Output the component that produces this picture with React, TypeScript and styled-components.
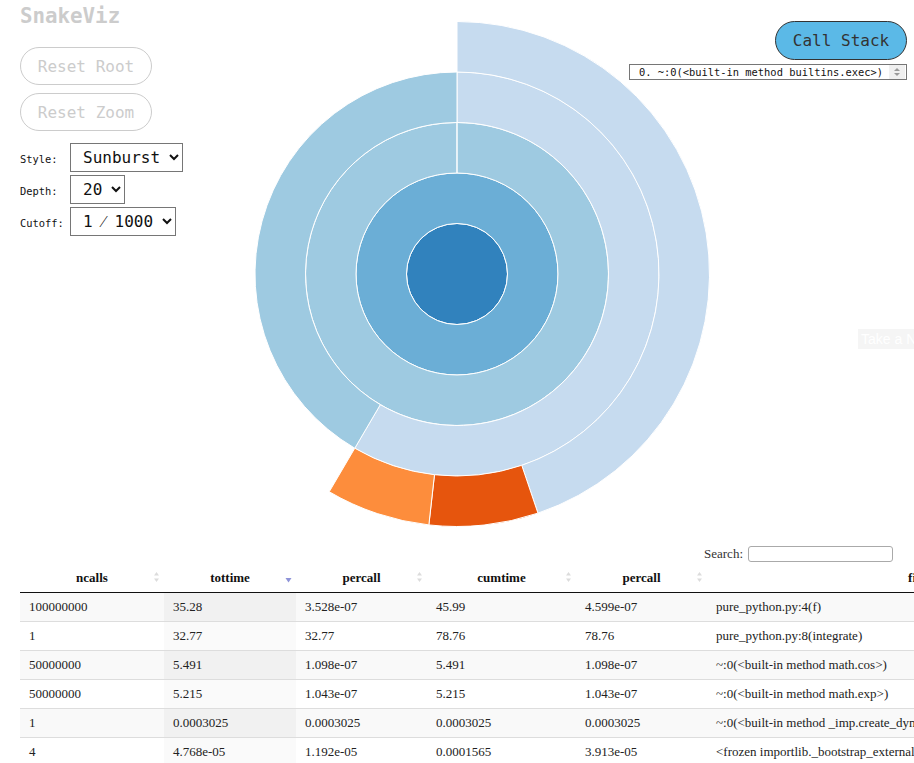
import React from "react";
import styled, { createGlobalStyle } from "styled-components";

const Global = createGlobalStyle`
  html, body { margin: 0; padding: 0; overflow: hidden; background: #fff; }
  body { font-family: "DejaVu Sans Mono", monospace; color: #222; }
`;

const Page = styled.div`
  position: relative;
  width: 914px;
  height: 763px;
  overflow: hidden;
`;

const Top = styled.div`
  display: grid;
  grid-template-columns: 184px 506px minmax(0, 1fr);
  padding: 0 7px 0 20px;
  align-items: start;
`;

const LeftCol = styled.div`
  display: flex;
  flex-direction: column;
  align-items: flex-start;
`;

const Title = styled.h1`
  margin: 4px 0 0;
  font-family: "DejaVu Sans Mono", monospace;
  font-weight: bold;
  font-size: 20.8px;
  line-height: 24px;
  color: #cccccc;
`;

const PillButton = styled.button<{ $active?: boolean }>`
  box-sizing: border-box;
  width: 132px;
  height: ${(p) => (p.$active ? 39 : 38)}px;
  border-radius: 20px;
  border: 1px solid ${(p) => (p.$active ? "#333" : "#cccccc")};
  background: ${(p) => (p.$active ? "#5bb9e7" : "#fff")};
  color: ${(p) => (p.$active ? "#333" : "#cccccc")};
  font-family: "DejaVu Sans Mono", monospace;
  font-size: 16px;
  padding: 0;
  margin-top: ${(p) => (p.$active ? 0 : 8)}px;
  &:first-of-type { margin-top: ${(p) => (p.$active ? 0 : 19)}px; }
`;

const Controls = styled.div`
  display: grid;
  grid-template-columns: 50px auto;
  row-gap: 3px;
  align-items: center;
  justify-items: start;
  margin-top: 12px;
`;

const Label = styled.label`
  font-family: "DejaVu Sans Mono", monospace;
  font-size: 10.4px;
  color: #111;
  padding-top: 2px;
`;

const Select = styled.select`
  box-sizing: border-box;
  height: 29px;
  font-family: "DejaVu Sans Mono", monospace;
  font-size: 16px;
  color: #111;
  background: #fff;
  border: 1px solid #767676;
  border-radius: 0;
  padding: 0 5px 0 8px;
`;

const Center = styled.div`
  margin-top: 21px;
  width: 506px;
  height: 506px;
`;

const RightCol = styled.div`
  margin-top: 21px;
  display: flex;
  flex-direction: column;
  align-items: flex-end;
`;

const StackBox = styled.div`
  position: relative;
  box-sizing: border-box;
  margin-top: 4px;
  width: 278px;
  height: 16px;
  border: 1px solid #767676;
  background: #fff;
  display: flex;
  align-items: center;
  padding-left: 9px;
  font-family: "DejaVu Sans Mono", monospace;
  font-size: 10.4px;
  color: #111;
  white-space: nowrap;
`;

const Spinner = styled.span`
  position: absolute;
  right: 1px;
  top: 0;
  width: 16px;
  height: 14px;
  background: #f0f0f0;
  display: flex;
  align-items: center;
  justify-content: center;
`;

const Tip = styled.div`
  position: absolute;
  left: 858px;
  top: 329px;
  height: 20px;
  padding: 0 3px;
  background: #f5f5f5;
  color: #fff;
  font-family: "Liberation Sans", sans-serif;
  font-size: 14px;
  line-height: 20px;
  white-space: nowrap;
`;

const TableSection = styled.div`
  padding-left: 20px;
  margin-top: 19px;
`;

const SearchRow = styled.div`
  display: flex;
  justify-content: flex-end;
  align-items: center;
  padding-right: 21px;
  width: 894px;
  box-sizing: border-box;
  font-family: "Liberation Serif", serif;
  font-size: 13px;
  color: #333;
`;

const SearchInput = styled.input`
  box-sizing: border-box;
  width: 145px;
  height: 16px;
  margin: 0 0 0 5px;
  padding: 0 4px;
  border: 1px solid #aaa;
  border-radius: 3px;
  background: transparent;
`;

const Table = styled.table`
  margin-top: 2px;
  table-layout: fixed;
  border-collapse: separate;
  border-spacing: 0;
  width: 1230px;
  font-family: "Liberation Serif", serif;
  font-size: 13px;
  color: #222;
`;

const Th = styled.th`
  position: relative;
  box-sizing: border-box;
  height: 29px;
  padding: 0 18px;
  text-align: center;
  vertical-align: middle;
  font-weight: bold;
  color: #111;
  border-bottom: 1px solid #111;
  white-space: nowrap;
`;

const SortIcon = styled.span`
  position: absolute;
  right: 4px;
  top: 7px;
  width: 7px;
  height: 12px;
  display: flex;
`;

const Tr = styled.tr<{ $odd: boolean }>`
  background: ${(p) => (p.$odd ? "#f9f9f9" : "#fff")};
`;

const Td = styled.td<{ $sorted?: boolean; $odd: boolean; $first: boolean }>`
  height: 28px;
  padding: 0 10px 0 9px;
  vertical-align: middle;
  white-space: nowrap;
  overflow: hidden;
  border-top: ${(p) => (p.$first ? "none" : "1px solid #ddd")};
  background: ${(p) =>
    p.$sorted ? (p.$odd ? "#f1f1f1" : "#fafafa") : "transparent"};
`;

const CX = 253;
const CY = 253;

function pt(r: number, a: number): string {
  const rad = (a * Math.PI) / 180;
  return `${(CX + r * Math.sin(rad)).toFixed(2)},${(CY - r * Math.cos(rad)).toFixed(2)}`;
}

/* Annular sector; each arc split at its midpoint so near-full rings render. */
function arcPath(r0: number, r1: number, a0: number, a1: number): string {
  const m = (a0 + a1) / 2;
  const lg = (a1 - a0) / 2 > 180 ? 1 : 0;
  return (
    `M${pt(r1, a0)}A${r1},${r1} 0 ${lg} 1 ${pt(r1, m)}A${r1},${r1} 0 ${lg} 1 ${pt(r1, a1)}` +
    `L${pt(r0, a1)}A${r0},${r0} 0 ${lg} 0 ${pt(r0, m)}A${r0},${r0} 0 ${lg} 0 ${pt(r0, a0)}Z`
  );
}

function ringPath(r0: number, r1: number): string {
  return (
    `M${CX},${CY - r1}A${r1},${r1} 0 1 1 ${CX},${CY + r1}A${r1},${r1} 0 1 1 ${CX},${CY - r1}` +
    `M${CX},${CY - r0}A${r0},${r0} 0 1 0 ${CX},${CY + r0}A${r0},${r0} 0 1 0 ${CX},${CY - r0}Z`
  );
}

const segments = [
  { r0: 50.5, r1: 101, a0: 0, a1: 360, fill: "#6baed6" },
  { r0: 101, r1: 151.5, a0: 0, a1: 359.99, fill: "#9ecae1" },
  { r0: 151.5, r1: 202, a0: 0, a1: 210.4, fill: "#c6dbef" },
  { r0: 151.5, r1: 202, a0: 210.4, a1: 360, fill: "#9ecae1" },
  { r0: 202, r1: 252.5, a0: 0, a1: 161.3, fill: "#c6dbef" },
  { r0: 202, r1: 252.5, a0: 161.3, a1: 186.4, fill: "#e6550d" },
  { r0: 202, r1: 252.5, a0: 186.4, a1: 210.4, fill: "#fd8d3c" },
];

const Sunburst = () => (
  <svg width="506" height="506" viewBox="0 0 506 506">
    <circle cx={CX} cy={CY} r={50.5} fill="#3182bd" stroke="#fff" strokeWidth={1} />
    {segments.map((s, i) => (
      <path
        key={i}
        d={s.a1 - s.a0 >= 360 ? ringPath(s.r0, s.r1) : arcPath(s.r0, s.r1, s.a0, s.a1)}
        fill={s.fill}
        fillRule="evenodd"
        stroke="#fff"
        strokeWidth={1}
      />
    ))}
  </svg>
);

const BothIcon = () => (
  <svg width="7" height="12" viewBox="0 0 7 12">
    <path d="M3.5 1 L6 4.5 L1 4.5 Z" fill="#dcdcdc" />
    <path d="M3.5 11 L6 7.5 L1 7.5 Z" fill="#dcdcdc" />
  </svg>
);

const DescIcon = () => (
  <svg width="7" height="12" viewBox="0 0 7 12">
    <path d="M0.5 7 L6.5 7 L3.5 11.5 Z" fill="#8e93d8" />
  </svg>
);

const columns = [
  { name: "ncalls", width: 144, sort: "both" as const },
  { name: "tottime", width: 132, sort: "desc" as const },
  { name: "percall", width: 131, sort: "both" as const },
  { name: "cumtime", width: 149, sort: "both" as const },
  { name: "percall", width: 131, sort: "both" as const },
  { name: "filename:lineno(function)", width: 543, sort: "both" as const },
];

const rows = [
  ["100000000", "35.28", "3.528e-07", "45.99", "4.599e-07", "pure_python.py:4(f)"],
  ["1", "32.77", "32.77", "78.76", "78.76", "pure_python.py:8(integrate)"],
  ["50000000", "5.491", "1.098e-07", "5.491", "1.098e-07", "~:0(<built-in method math.cos>)"],
  ["50000000", "5.215", "1.043e-07", "5.215", "1.043e-07", "~:0(<built-in method math.exp>)"],
  ["1", "0.0003025", "0.0003025", "0.0003025", "0.0003025", "~:0(<built-in method _imp.create_dynamic>)"],
  ["4", "4.768e-05", "1.192e-05", "0.0001565", "3.913e-05", "<frozen importlib._bootstrap_external>:1233(create_module)"],
];

export default function App() {
  return (
    <Page>
      <Global />
      <Top>
        <LeftCol>
          <Title>SnakeViz</Title>
          <PillButton disabled>Reset Root</PillButton>
          <PillButton disabled>Reset Zoom</PillButton>
          <Controls>
            <Label>Style:</Label>
            <Select defaultValue="sunburst">
              <option value="sunburst">Sunburst</option>
              <option value="icicle">Icicle</option>
            </Select>
            <Label>Depth:</Label>
            <Select defaultValue="20">
              <option value="10">10</option>
              <option value="20">20</option>
              <option value="30">30</option>
            </Select>
            <Label>Cutoff:</Label>
            <Select defaultValue="1000">
              <option value="100">1 ⁄ 100</option>
              <option value="1000">1 ⁄ 1000</option>
            </Select>
          </Controls>
        </LeftCol>
        <Center>
          <Sunburst />
        </Center>
        <RightCol>
          <PillButton $active>Call Stack</PillButton>
          <StackBox>
            0. ~:0(&lt;built-in method builtins.exec&gt;)
            <Spinner>
              <svg width="8" height="10" viewBox="0 0 8 10">
                <path d="M4 1 L7 4 L1 4 Z" fill="#9a9a9a" />
                <path d="M4 9 L7 6 L1 6 Z" fill="#9a9a9a" />
              </svg>
            </Spinner>
          </StackBox>
        </RightCol>
      </Top>
      <Tip>Take a Note</Tip>
      <TableSection>
        <SearchRow>
          Search:<SearchInput type="search" />
        </SearchRow>
        <Table>
          <colgroup>
            {columns.map((c, i) => (
              <col key={i} style={{ width: c.width }} />
            ))}
          </colgroup>
          <thead>
            <tr>
              {columns.map((c, i) => (
                <Th key={i}>
                  {c.name}
                  <SortIcon>
                    {c.sort === "desc" ? <DescIcon /> : <BothIcon />}
                  </SortIcon>
                </Th>
              ))}
            </tr>
          </thead>
          <tbody>
            {rows.map((r, ri) => (
              <Tr key={ri} $odd={ri % 2 === 0}>
                {r.map((v, ci) => (
                  <Td key={ci} $sorted={ci === 1} $odd={ri % 2 === 0} $first={ri === 0}>
                    {v}
                  </Td>
                ))}
              </Tr>
            ))}
          </tbody>
        </Table>
      </TableSection>
    </Page>
  );
}
